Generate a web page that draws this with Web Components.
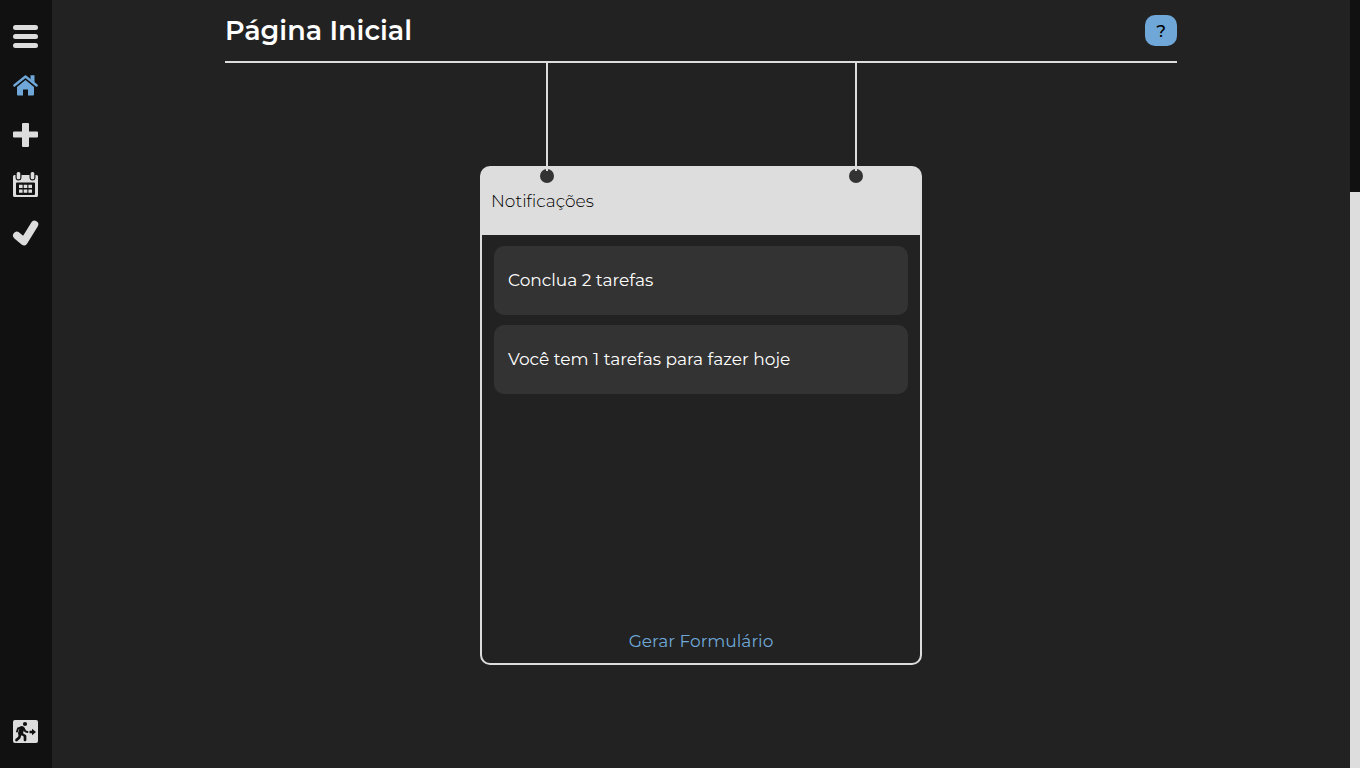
<!DOCTYPE html>
<html lang="pt-BR">
<head>
<meta charset="utf-8">
<meta name="viewport" content="width=device-width, initial-scale=1">
<title>Página Inicial</title>
<style>
  :root { --bg: #222; --dark: #111; --light: #ddd; --item: #333; --accent: #6fa8d8; }
  body { margin: 0; background: var(--bg); color: #fff; font-family: Montserrat, Inter, sans-serif; font-size: 17px; }
</style>
</head>
<body>
<app-shell>
  <nav-bar slot="nav"></nav-bar>
  <page-header>Página Inicial</page-header>
  <hanging-board heading="Notificações">
    <notice-item>Conclua 2 tarefas</notice-item>
    <notice-item>Você tem 1 tarefas para fazer hoje</notice-item>
    <a slot="action" href="#formulario">Gerar Formulário</a>
  </hanging-board>
</app-shell>
<script>
  const define = (name, html, setup) => customElements.define(name, class extends HTMLElement {
    connectedCallback() {
      if (this.shadowRoot) return;
      this.attachShadow({ mode: "open" }).innerHTML = html;
      if (setup) setup(this);
    }
  });

  define("app-shell", `
    <style>
      :host { display: grid; grid-template-columns: 52px 1fr 10px; min-height: 100vh; }
      main { display: flex; flex-direction: column; align-items: center; }
      .track { background: var(--dark); display: flex; flex-direction: column; justify-content: flex-end; }
      .thumb { height: 75%; background: var(--light); }
    </style>
    <slot name="nav"></slot>
    <main><slot></slot></main>
    <div class="track" aria-hidden="true"><div class="thumb"></div></div>`);

  define("nav-bar", `
    <style>
      :host { display: flex; background: var(--dark); }
      nav { flex: 1; display: flex; flex-direction: column; padding: 12px 0; }
      .spacer { flex: 1; }
    </style>
    <nav aria-label="Principal">
      <nav-button icon="menu" label="Menu"></nav-button>
      <nav-button icon="home" label="Início" active></nav-button>
      <nav-button icon="plus" label="Adicionar"></nav-button>
      <nav-button icon="calendar" label="Calendário"></nav-button>
      <nav-button icon="check" label="Concluídas"></nav-button>
      <div class="spacer"></div>
      <nav-button icon="exit" label="Sair"></nav-button>
    </nav>`);

  const icons = {
    menu: `<rect y="2" width="25" height="5" rx="2.5"/><rect y="11" width="25" height="5" rx="2.5"/><rect y="20" width="25" height="5" rx="2.5"/>`,
    home: `<path d="M12.5 8 21 15v7.500a1 1 0 0 1-1 1h-5v-6h-5v6H5a1 1 0 0 1-1-1V15z"/><path d="M17.500 3.300h4v7.500l-4-3.500z"/><path d="M1.300 13.500 12.500 4.500 23.700 13.500" fill="none" stroke="currentColor" stroke-width="2.300" stroke-linecap="round" stroke-linejoin="round"/>`,
    plus: `<path d="M10 2h5q1 0 1 1v7.500h8q1 0 1 1v4q0 1-1 1h-8V25q0 1-1 1h-5q-1 0-1-1v-8.500H1q-1 0-1-1v-4q0-1 1-1h8V3q0-1 1-1z"/>`,
    calendar: `<path fill-rule="evenodd" d="M1.500 5H2.500v2q0 3.500 3 3.500t3-3.500V5h8v2q0 3.500 3 3.500t3-3.500V5h1q1.500 0 1.500 1.500v19q0 1.500-1.500 1.500h-22q-1.500 0-1.500-1.500v-19Q0 5 1.500 5zM4 12.500q-1 0-1 1V24q0 1 1 1h17q1 0 1-1V13.500q0-1-1-1z"/><rect x="3.700" y="2" width="3.600" height="7.300" rx="1.500"/><rect x="17.700" y="2" width="3.600" height="7.300" rx="1.500"/><path d="M6 14.700h3.600V18H6zm4.700 0h3.600V18h-3.600zm4.700 0H19V18h-3.600zM6 19.400h3.600v3.400H6zm4.700 0h3.600v3.400h-3.600zm4.700 0H19v3.400h-3.600z"/>`,
    check: `<path d="M3.800 16.500 11 22.500 21.500 5.500" fill="none" stroke="currentColor" stroke-width="7.500" stroke-linecap="round" stroke-linejoin="round"/>`,
    exit: `<rect y="2" width="25" height="23" rx="2"/><g fill="#111" stroke="#111" stroke-linecap="round" stroke-linejoin="round"><circle cx="12" cy="6" r="2.100" stroke="none"/><path d="M9 10.500 7.500 15" stroke-width="4.800"/><path d="M8 9.500 5 10.500 4 13.500M10.500 10 12.300 13.300l2.200.7" fill="none" stroke-width="1.900"/><path d="M9 16 12 18v4M7 16.500l-.7 3L3.500 22" fill="none" stroke-width="2.700"/><path d="M16.500 12.700h2.500v-2l4 3.300-4 3.300v-2h-2.500z" stroke="none"/></g>`
  };

  define("nav-button", `
    <style>
      :host { display: block; }
      button { display: flex; align-items: center; justify-content: center; width: 100%; height: 49px; margin: 0; padding: 0; border: 0; background: none; color: var(--light); cursor: pointer; }
      :host([active]) button { color: var(--accent); }
      svg { display: block; width: 26px; height: 27px; fill: currentColor; overflow: visible; }
    </style>
    <button type="button"></button>`, el => {
      const button = el.shadowRoot.querySelector("button");
      button.setAttribute("aria-label", el.getAttribute("label"));
      button.innerHTML = `<svg viewBox="0 0 26 27" aria-hidden="true">${icons[el.getAttribute("icon")]}</svg>`;
    });

  define("page-header", `
    <style>
      :host { display: flex; align-items: center; justify-content: space-between; box-sizing: border-box; width: 70vw; height: 63px; border-bottom: 2px solid var(--light); }
      h1 { margin: 0; font-size: 27px; font-weight: 600; line-height: 36px; }
      button { width: 32px; height: 31px; padding: 0; border: 0; border-radius: 10px; background: var(--accent); color: #000; font: 500 17px/20px Montserrat, Inter, sans-serif; cursor: pointer; }
    </style>
    <h1><slot></slot></h1>
    <button type="button" aria-label="Ajuda">?</button>`);

  define("hanging-board", `
    <style>
      :host { display: flex; flex-direction: column; width: 32.5vw; }
      .ropes { display: flex; justify-content: space-between; height: 103px; padding: 0 59px 0 60px; }
      .rope { position: relative; width: 14px; }
      .rope::before, .rope::after { content: ""; position: absolute; }
      .rope::after { left: 6px; top: 0; width: 2px; height: 108px; background: var(--light); }
      .rope::before { left: 0; top: 106px; width: 14px; height: 14px; border-radius: 50%; background: var(--item); }
      section { box-sizing: border-box; display: flex; flex-direction: column; min-height: 65vh; border: 2px solid var(--light); border-radius: 10px; background: linear-gradient(var(--light) 20px, transparent 20px); }
      h2 { margin: 0; padding: 22px 9px; border-radius: 8px 8px 0 0; background: var(--light); color: #000; font-size: 17px; font-weight: 300; line-height: 23px; }
      .items { flex: 1; display: flex; flex-direction: column; gap: 10px; padding: 11px 12px; }
      .action { display: flex; justify-content: center; padding: 12px; line-height: 20px; }
      ::slotted(a) { color: var(--accent); text-decoration: none; }
    </style>
    <div class="ropes" aria-hidden="true"><div class="rope"></div><div class="rope"></div></div>
    <section aria-labelledby="heading">
      <h2 id="heading"></h2>
      <div class="items"><slot></slot></div>
      <div class="action"><slot name="action"></slot></div>
    </section>`, el => {
      el.shadowRoot.querySelector("h2").textContent = el.getAttribute("heading");
    });

  define("notice-item", `
    <style>
      :host { display: block; padding: 24px 14px; border-radius: 10px; background: var(--item); font-weight: 400; line-height: 21px; }
    </style>
    <slot></slot>`);
</script>
</body>
</html>
